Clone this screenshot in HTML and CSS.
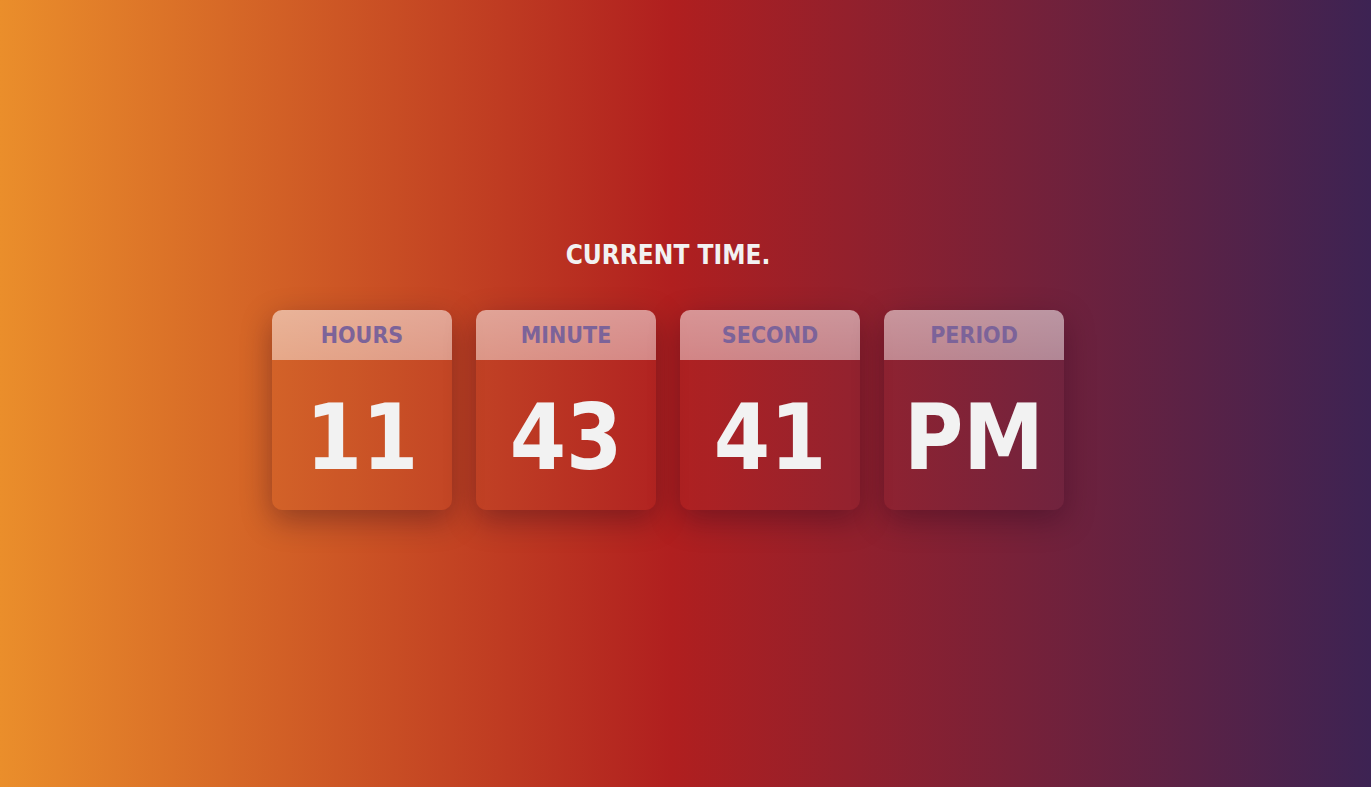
FILE: index.html
```html
<!DOCTYPE html>
<html>
<head>
<meta charset="utf-8">
<link rel="stylesheet" href="styles.css">
</head>
<body>
<main class="page">
  <h1 class="title">CURRENT TIME.</h1>
  <div class="clock">
    <div class="card"><div class="label">HOURS</div><div class="value">11</div></div>
    <div class="card"><div class="label">MINUTE</div><div class="value">43</div></div>
    <div class="card"><div class="label">SECOND</div><div class="value">41</div></div>
    <div class="card"><div class="label">PERIOD</div><div class="value">PM</div></div>
  </div>
</main>
</body>
</html>
```
FILE: styles.css
```css
html, body { margin: 0; height: 100%; }
body {
  background: linear-gradient(to right, #ea8e2b 0%, #b01f1f 49%, #3d2353 100%);
  font-family: "DejaVu Sans Condensed", "DejaVu Sans", sans-serif;
  color: #f2f2f2;
}
.page {
  height: 787px;
  box-sizing: border-box;
  padding: 236px 35px 0 0;
  display: flex;
  flex-direction: column;
  align-items: center;
}
.title {
  margin: 0;
  font-size: 26px;
  font-weight: bold;
  line-height: 38px;
}
.clock {
  margin-top: 36px;
  display: flex;
  gap: 24px;
}
.card {
  width: 180px;
  height: 200px;
  border-radius: 10px;
  overflow: hidden;
  background: rgba(255,255,255,0.01);
  box-shadow: 0 10px 30px rgba(30,5,30,0.35);
  display: flex;
  flex-direction: column;
}
.label {
  height: 50px;
  display: flex;
  align-items: center;
  justify-content: center;
  background: linear-gradient(to bottom, rgba(255,255,255,0.52), rgba(255,255,255,0.45));
  color: #7c6399;
  font-size: 23px;
  font-weight: bold;
}
.value {
  flex: 1;
  display: flex;
  align-items: center;
  justify-content: center;
  font-size: 90px;
  font-weight: bold;
  padding-top: 4px;
}
```
